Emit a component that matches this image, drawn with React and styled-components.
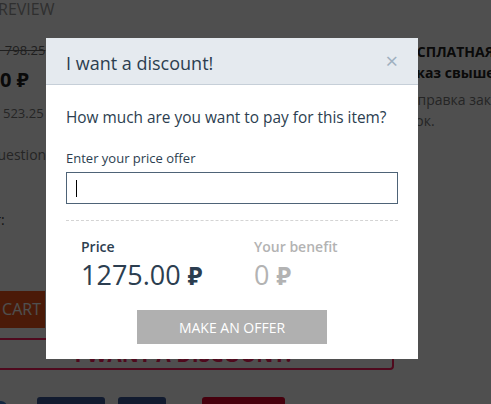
import React from "react";
import styled, { createGlobalStyle } from "styled-components";

const Global = createGlobalStyle`
  html, body { margin: 0; padding: 0; background: #fff; }
  body { font-family: "Open Sans", "Noto Sans", sans-serif; }
  * { box-sizing: border-box; }
`;

const Page = styled.div`
  position: relative;
  width: 491px;
  height: 404px;
  overflow: hidden;
  background: #fff;
  display: flex;
  gap: 6px;
`;

const MainCol = styled.div`
  margin-left: -100px;
  width: 494px;
  flex: none;
  display: flex;
  flex-direction: column;
`;

const Line = styled.div`
  margin-left: ${(p) => p.$x}px;
  margin-top: ${(p) => p.$top}px;
  font-size: ${(p) => p.$size || 13}px;
  font-weight: ${(p) => (p.$bold ? 700 : 400)};
  line-height: ${(p) => p.$lh || 20}px;
  color: ${(p) => p.$color || "#555"};
  white-space: nowrap;
  text-decoration: ${(p) => (p.$strike ? "line-through" : "none")};
`;

const CartButton = styled.div`
  margin-top: ${(p) => p.$top}px;
  width: 145px;
  height: 37px;
  background: #f0561c;
  color: #fff;
  font-size: 16px;
  line-height: 37px;
  text-align: right;
  padding-right: 4px;
`;

const DiscountButton = styled.div`
  margin-top: 10px;
  height: 32px;
  border: 2px solid #ff1f5e;
  border-radius: 4px;
  color: #ff1f5e;
  font-weight: 700;
  font-size: 21px;
  line-height: 29px;
  text-align: center;
  padding-left: 72px;
`;

const SocialRow = styled.div`
  margin-top: 27px;
  display: flex;
  align-items: center;
  padding-left: 95px;
`;

const Circle = styled.span`
  width: 12px;
  height: 12px;
  border-radius: 50%;
  background: #3b7fd0;
`;

const Social = styled.span`
  margin-left: ${(p) => p.$gap}px;
  width: ${(p) => p.$w}px;
  height: 20px;
  border-radius: 3px;
  background: ${(p) => p.$bg};
`;

const RightCol = styled.div`
  flex: none;
  width: 200px;
  padding-top: 41px;
  font-size: 14px;
  line-height: 21px;
  white-space: nowrap;
`;

const Strong = styled.div`
  font-weight: 700;
  color: #222;
`;

const Plain = styled.div`
  color: #777;
  margin-top: ${(p) => p.$top || 0}px;
`;

const Backdrop = styled.div`
  position: absolute;
  inset: 0;
  background: rgba(0, 0, 0, 0.69);
  display: flex;
  align-items: flex-start;
  padding: 38px 0 0 46px;
`;

const Modal = styled.div`
  width: 372px;
  background: #fff;
  color: #2c3e50;
`;

const Header = styled.div`
  height: 47px;
  background: #e5eaef;
  border-bottom: 1px solid #c6cfd8;
  display: flex;
  align-items: center;
  justify-content: space-between;
  padding: 0 20px 0 20px;
`;

const Title = styled.div`
  font-size: 18px;
  line-height: 24px;
  color: #2c3e50;
  padding-top: 3px;
`;

const Close = styled.div`
  font-size: 22px;
  line-height: 20px;
  color: #9fb0c0;
  margin-top: -2px;
`;

const Body = styled.div`
  padding: 22px 20px 15px;
`;

const Question = styled.div`
  font-size: 15.4px;
  line-height: 22px;
  color: #2c3e50;
  white-space: nowrap;
`;

const Label = styled.div`
  margin-top: 21px;
  font-size: 13px;
  line-height: 17px;
  color: #2c3e50;
`;

const InputWrap = styled.div`
  position: relative;
  margin-top: 5px;
`;

const Input = styled.input`
  display: block;
  width: 100%;
  height: 32px;
  border: 1px solid #4e6377;
  border-radius: 0;
  outline: none;
  padding: 0 10px;
  font-family: inherit;
  font-size: 14px;
  color: #2c3e50;
`;

const Caret = styled.span`
  position: absolute;
  left: 10px;
  top: 8px;
  width: 1px;
  height: 17px;
  background: #000;
`;

const Divider = styled.div`
  margin-top: 16px;
  border-top: 1px dashed #d4d4d4;
`;

const Prices = styled.div`
  margin-top: 16px;
  padding-left: 15px;
  display: grid;
  grid-template-columns: 173px auto;
`;

const PriceCol = styled.div`
  color: ${(p) => (p.$muted ? "#b3b3b3" : "#2c3e50")};
`;

const PriceLabel = styled.div`
  font-size: 14px;
  font-weight: 600;
  line-height: 19px;
`;

const PriceValue = styled.div`
  font-size: 27px;
  line-height: 38px;
`;

const Rub = styled.span`
  font-weight: 700;
  font-size: 0.9em;
`;

const OfferButton = styled.button`
  display: block;
  margin: 15px auto 0;
  width: 190px;
  height: 34px;
  border: none;
  background: #b0b0b0;
  color: #fff;
  font-family: inherit;
  font-size: 14px;
  letter-spacing: 0;
  text-transform: uppercase;
`;

export default function App() {
  return (
    <>
      <Global />
      <Page>
        <MainCol>
          <Line $x={98} $top={-2} $size={16} $lh={22} $color="#999">REVIEW</Line>
          <Line $x={94} $top={20} $strike $color="#666">1 798.25</Line>
          <Line $x={100} $top={6} $size={20} $bold $lh={28} $color="#222">0 ₽</Line>
          <Line $x={103} $top={9} $color="#777">523.25</Line>
          <Line $x={51} $top={22} $size={14} $color="#777">Ask a question</Line>
          <Line $x={66} $top={45} $size={14} $color="#444">Color:</Line>
          <CartButton $top={61}>CART</CartButton>
          <DiscountButton>I WANT A DISCOUNT!</DiscountButton>
          <SocialRow>
            <Circle />
            <Social $gap={30} $w={68} $bg="#3b5998" />
            <Social $gap={13} $w={48} $bg="#3b5998" />
            <Social $gap={36} $w={83} $bg="#e0002a" />
          </SocialRow>
        </MainCol>
        <RightCol>
          <Strong>БЕСПЛАТНАЯ ДОСТАВКА</Strong>
          <Strong>заказ свыше 3000 ₽</Strong>
          <Plain $top={6}>Отправка заказа в день</Plain>
          <Plain>срок.</Plain>
        </RightCol>
        <Backdrop>
          <Modal>
            <Header>
              <Title>I want a discount!</Title>
              <Close>×</Close>
            </Header>
            <Body>
              <Question>How much are you want to pay for this item?</Question>
              <Label>Enter your price offer</Label>
              <InputWrap>
                <Input type="text" />
                <Caret />
              </InputWrap>
              <Divider />
              <Prices>
                <PriceCol>
                  <PriceLabel>Price</PriceLabel>
                  <PriceValue>1275.00 <Rub>₽</Rub></PriceValue>
                </PriceCol>
                <PriceCol $muted>
                  <PriceLabel>Your benefit</PriceLabel>
                  <PriceValue>0 <Rub>₽</Rub></PriceValue>
                </PriceCol>
              </Prices>
              <OfferButton>Make an offer</OfferButton>
            </Body>
          </Modal>
        </Backdrop>
      </Page>
    </>
  );
}
